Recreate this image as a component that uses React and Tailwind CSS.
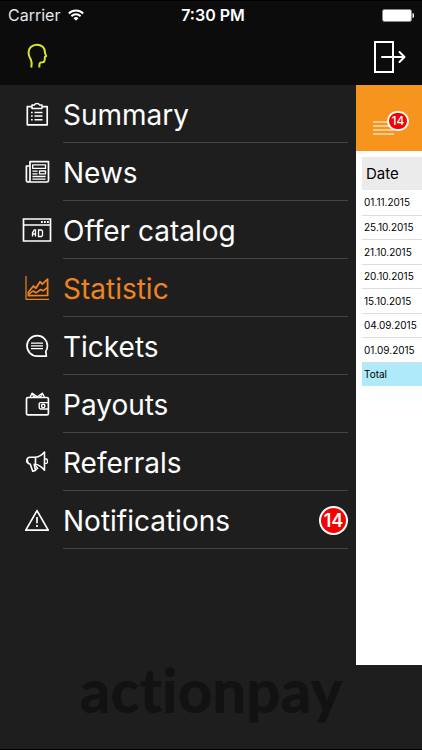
import React from 'react';
import clsx from 'clsx';

const iconProps = {
    viewBox: '0 0 32 28',
    fill: 'none',
    stroke: 'currentColor',
    strokeWidth: 1.7,
    strokeLinejoin: 'round',
    className: 'w-8 h-7 shrink-0',
    'aria-hidden': true
};

const SummaryIcon = () => (
    <svg {...iconProps}>
        <path d="M11 6.6H6.3v18.2h19.9V6.6H21" />
        <path d="M11 5h2.4a2.7 2.2 0 0 1 5.2 0H21v3.4H11z" strokeWidth="1.5" />
        <path d="M13.5 12.5h8M13.5 16h8M13.5 19.8h8" strokeWidth="1.4" />
        <path d="M10 12.5h1.7M10 16h1.7M10 19.8h1.7" strokeWidth="1.6" />
    </svg>
);

const NewsIcon = () => (
    <svg {...iconProps}>
        <path d="M9 8H5.4v14.4A1.7 1.7 0 0 0 7.2 24H26a1.5 1.5 0 0 0 1.5-1.5V3.7H9V22a1.8 1.8 0 0 1-1.8 2" />
        <path d="M11.7 6.8h12.8v3.6H11.7zM18.5 13h6v2.8h-6z" strokeWidth="1.3" />
        <path d="M11.4 13.1h5.2M11.4 15.8h5.2M11.4 18.5h13.2M11.4 21.2h13.2" strokeWidth="1.3" />
    </svg>
);

const OfferIcon = () => (
    <svg {...iconProps} strokeLinejoin="miter">
        <path d="M2.5 3h27v22h-27zM2.5 9h27" />
        <path d="M20 6h1.8M23 6h1.8M26 6h1.8" strokeWidth="1.8" />
        <path d="M11.5 20.5v-3.7l1.8-2.8h1.2v6.5M11.5 18h3M17.5 14h3l1 1v4.500l-1 1h-3z" strokeWidth="1.3" />
    </svg>
);

const StatisticIcon = () => (
    <svg {...iconProps}>
        <path d="M5 2v23.3h23" strokeWidth="1.2" />
        <path d="M7.4 18.3l5-6.3 2.5 2.2L19 7.7l2.3 2.5 5.3-5v16.2l-19.2.3z" strokeWidth="1.8" />
        <path d="M7.4 20.6l4.5-3.6 3.2 1.8 4.6-3.3 2.2 1.3 4.8-3.4" strokeWidth="1.6" />
    </svg>
);

const TicketsIcon = () => (
    <svg {...iconProps}>
        <path d="M25.4 24.1h-9.2A10.2 10.2 0 1 1 26.4 14c0 2-.5 3.700-1.600 5.400z" />
        <path d="M10 11.2h12M10 13.9h12M10 16.6h12" strokeWidth="1.3" />
    </svg>
);

const PayoutsIcon = () => (
    <svg {...iconProps}>
        <rect x="5.5" y="7.5" width="21.9" height="17.4" rx="1.5" />
        <path d="M27.4 12.6h-7.8a1.4 1.4 0 0 0-1.4 1.4v3.6a1.4 1.4 0 0 0 1.4 1.4h7.8" strokeWidth="1.4" />
        <circle cx="22.2" cy="15.9" r="1.7" strokeWidth="1.4" />
        <path d="M9 7.5l2-4.3 5.3 3.6 5-3.6 2.3 4.3M11.5 5.5l3 2M21 5.5l-3 2" strokeWidth="1.4" />
    </svg>
);

const ReferralsIcon = () => (
    <svg {...iconProps} strokeWidth={1.6}>
        <path d="M14.5 9.3c3.8-.5 6.500-2.300 9-5.300v18.200c-2.500-3-5.200-5.500-9-6z" />
        <path d="M14.5 9.3H9.3a3.3 3.3 0 0 0-1.8 6.2l1.8.7 2.4 7 2.8-.7-1.3-6.3h1.3" />
        <path d="M13.8 16.7l3 3.8-2.3 1.2M6.2 11.5l1 3.7" strokeWidth="1.3" />
        <path d="M23.5 11h1.7a1.2 1.2 0 0 1 1.2 1.2v2a1.2 1.2 0 0 1-1.2 1.2h-1.7" strokeWidth="1.3" />
    </svg>
);

const NotificationsIcon = () => (
    <svg {...iconProps}>
        <path d="M16 4.6l11.2 19.6H4.8z" />
        <path d="M16 11v6.3M16 19v2" />
    </svg>
);

const menuItems = [
    { label: 'Summary', icon: SummaryIcon },
    { label: 'News', icon: NewsIcon },
    { label: 'Offer catalog', icon: OfferIcon },
    { label: 'Statistic', icon: StatisticIcon, active: true },
    { label: 'Tickets', icon: TicketsIcon },
    { label: 'Payouts', icon: PayoutsIcon },
    { label: 'Referrals', icon: ReferralsIcon },
    { label: 'Notifications', icon: NotificationsIcon, badge: 14 }
];

const dates = ['01.11.2015', '25.10.2015', '21.10.2015', '20.10.2015', '15.10.2015', '04.09.2015', '01.09.2015'];

function StatusBar() {
    return (
        <div className="grid grid-cols-3 items-center h-7 pl-2 pr-1 text-base leading-5">
            <div className="flex items-center gap-2 text-gray-200">
                <span>Carrier</span>
                <svg viewBox="0 0 16 12" className="w-4 h-3" fill="none" stroke="white" strokeWidth="2" aria-hidden="true">
                    <path d="M.8 4.5a10.3 10.3 0 0 1 14.4 0M3.4 7.2a6.5 6.5 0 0 1 9.2 0" />
                    <path d="M5.5 9.2a3.6 3.6 0 0 1 5 0L8 11.8z" fill="white" stroke="none" />
                </svg>
            </div>
            <span className="text-center font-semibold whitespace-nowrap">7:30 PM</span>
            <div className="flex justify-end pr-1">
                <svg viewBox="0 0 32 13" className="w-8 h-[13px]" aria-hidden="true">
                    <rect x=".5" y=".5" width="29" height="12" rx="2" fill="white" stroke="#8a8a8a" />
                    <path d="M31 4.5c1.3.8 1.3 3.2 0 4z" fill="white" stroke="white" />
                </svg>
            </div>
        </div>
    );
}

function TopBar() {
    return (
        <header className="bg-[#0c0c0c] border-t border-black">
            <StatusBar />
            <div className="flex items-center justify-between h-14 pl-6 pr-4">
                <button type="button" aria-label="Profile">
                    <svg viewBox="0 0 26 28" className="w-[26px] h-7" fill="none" stroke="#d9e52b" strokeWidth="2" strokeLinejoin="round" aria-hidden="true">
                        <path d="M7.3 24.5c.7-3 .8-5.3-.4-7.7C5.3 14 4.5 12 4.5 9.7c0-4.5 3.500-8 8.300-8 5 0 8.100 3.200 8.100 7.300 0 1.500.2 2.200 1.300 4.100l-1.300.7c.1 3.400-.6 5.500-1.900 5.500-2.300-.2-3.400.3-3.500 1.800l-.2 3.400" />
                    </svg>
                </button>
                <button type="button" aria-label="Log out">
                    <svg viewBox="0 0 32 34" className="w-8 h-[34px]" fill="none" stroke="white" strokeWidth="2" aria-hidden="true">
                        <path d="M1 2h18v30H1z" />
                        <path d="M8 17h22" strokeLinecap="round" />
                        <path d="M25.5 12l5 5-5 5" strokeLinecap="round" strokeLinejoin="round" />
                    </svg>
                </button>
            </div>
        </header>
    );
}

function MenuItem({ label, icon: Icon, active, badge }) {
    return (
        <li>
            <a href="#" className={clsx('flex items-center gap-2.5 h-[58px]', active ? 'text-[#ef8321]' : 'text-white')}>
                <Icon />
                <span className="flex flex-1 items-center justify-between h-full pt-0.5 border-b border-[#444]">
                    <span className="text-[28px] leading-9 whitespace-nowrap">{label}</span>
                    {badge && (
                        <span className="flex items-center justify-center w-[29px] h-[29px] rounded-full border-2 border-white bg-[#f40000] text-[18px] leading-5 font-semibold text-white">
                            {badge}
                        </span>
                    )}
                </span>
            </a>
        </li>
    );
}

function StatisticPanel() {
    return (
        <section className="w-[66px] shrink-0 overflow-hidden bg-white text-black">
            <div className="flex items-center h-[66px] pl-[17px] pt-5 bg-[#f7941e]">
                <button type="button" aria-label="Open menu" className="relative">
                    <svg viewBox="0 0 22 14" className="w-[22px] h-3.5" stroke="white" strokeWidth="1.2" aria-hidden="true">
                        <path d="M0 1h21M0 5h21M0 9h21M0 13h21" />
                    </svg>
                    <span className="absolute -top-2.5 left-3.5 flex items-center justify-center w-[22px] h-5 rounded-full border-2 border-white bg-[#f40000] text-xs leading-4 font-medium text-white">
                        14
                    </span>
                </button>
            </div>
            <div className="pl-1.5 pt-1.5">
                <table className="w-full text-left whitespace-nowrap">
                    <thead>
                        <tr className="h-[33px] bg-[#ebebeb]">
                            <th className="pl-1 text-[15px] leading-5 font-normal">Date</th>
                        </tr>
                    </thead>
                    <tbody className="text-[10px] leading-4">
                        {dates.map(date => (
                            <tr key={date} className="h-[25px] even:h-6 border-b border-[#ddd]">
                                <td className="pl-0.5">{date}</td>
                            </tr>
                        ))}
                        <tr className="h-6 bg-[#aeeafa]">
                            <td className="pl-0.5">Total</td>
                        </tr>
                    </tbody>
                </table>
            </div>
        </section>
    );
}

export default function App() {
    return (
        <div className="flex flex-col min-h-screen bg-[#1e1e1e] text-white font-['Inter',sans-serif]">
            <TopBar />
            <main className="flex flex-1">
                <nav className="flex-1 pl-[21px] pr-2">
                    <ul>
                        {menuItems.map(item => (
                            <MenuItem key={item.label} {...item} />
                        ))}
                    </ul>
                </nav>
                <StatisticPanel />
            </main>
            <footer className="flex justify-center h-[85px] border-b border-black">
                <span className="text-[60px] leading-[50px] font-black text-[#121212] [font-variant-ligatures:none] font-['Lato',sans-serif]">actionpay</span>
            </footer>
        </div>
    );
}
